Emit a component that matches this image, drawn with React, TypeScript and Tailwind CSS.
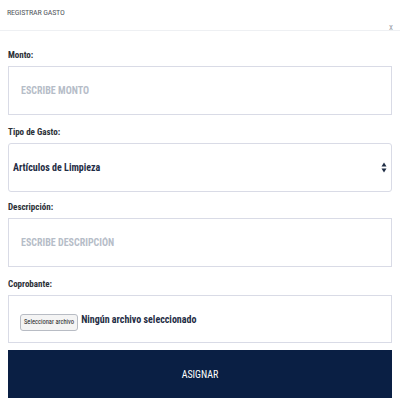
const font = "font-['Liberation_Sans_Narrow','Roboto_Condensed','Liberation_Sans',sans-serif]";

const Label = ({ children }: { children: React.ReactNode }) => (
  <div className="text-[9px] font-bold text-[#2b2f36] h-[14px] leading-[14px] mb-[4px]">{children}</div>
);

const App = () => {
  return (
    <div className={`w-[400px] h-[400px] bg-white overflow-hidden ${font}`}>
      {/* Header */}
      <div className="relative h-[31px] border-b border-[#eef0f3]">
        <div className="absolute left-[7px] top-[7px] text-[8px] text-[#555a62] tracking-[-0.2px]">REGISTRAR GASTO</div>
        <div className="absolute right-[7px] top-[21px] text-[9px] text-[#a0a4ab]">x</div>
      </div>

      <div className="px-[8px] pt-[17px]">
        <Label>Monto:</Label>
        <div className="h-[49px] border border-[#d9dbe6] bg-white">
          <input
            className="w-full h-full px-[12px] outline-none text-[10px] font-bold placeholder:text-[#b6bdc8] bg-transparent"
            placeholder="ESCRIBE MONTO"
          />
        </div>

        <div className="h-[10px]" />
        <Label>Tipo de Gasto:</Label>
        <div className="h-[49px] border border-[#d9dbe6] rounded-[3px] bg-white flex items-center justify-between px-[4px]">
          <span className="text-[10px] font-bold text-[#1f2d45]">Artículos de Limpieza</span>
          <svg width="6" height="11" viewBox="0 0 6 11">
            <path d="M3 0.5 L5.5 4.5 L0.5 4.5 Z" fill="#1f2d45" />
            <path d="M3 10.5 L5.5 6.5 L0.5 6.5 Z" fill="#1f2d45" />
          </svg>
        </div>

        <div className="h-[8px]" />
        <Label>Descripción:</Label>
        <div className="h-[49px] border border-[#d9dbe6] bg-white">
          <input
            className="w-full h-full px-[12px] outline-none text-[10px] font-bold placeholder:text-[#b6bdc8] bg-transparent"
            placeholder="ESCRIBE DESCRIPCIÓN"
          />
        </div>

        <div className="h-[10px]" />
        <Label>Coprobante:</Label>
        <div className="h-[48px] border border-[#d9dbe6] bg-white flex items-start pt-[18px] pl-[11px] gap-[3px]">
          <button className="h-[17px] px-[3px] border border-[#b8bcc4] rounded-[3px] bg-[#f4f4f4] text-[6.5px] text-[#222] leading-none">
            Seleccionar archivo
          </button>
          <span className="text-[10px] font-bold text-[#1f2d45] leading-[13px] -mt-[1px]">Ningún archivo seleccionado</span>
        </div>

        <button className="mt-[7px] w-full h-[48px] bg-[#0a1f44] text-white text-[10px] flex items-center justify-center">
          ASIGNAR
        </button>
      </div>
    </div>
  );
};

export default App;
